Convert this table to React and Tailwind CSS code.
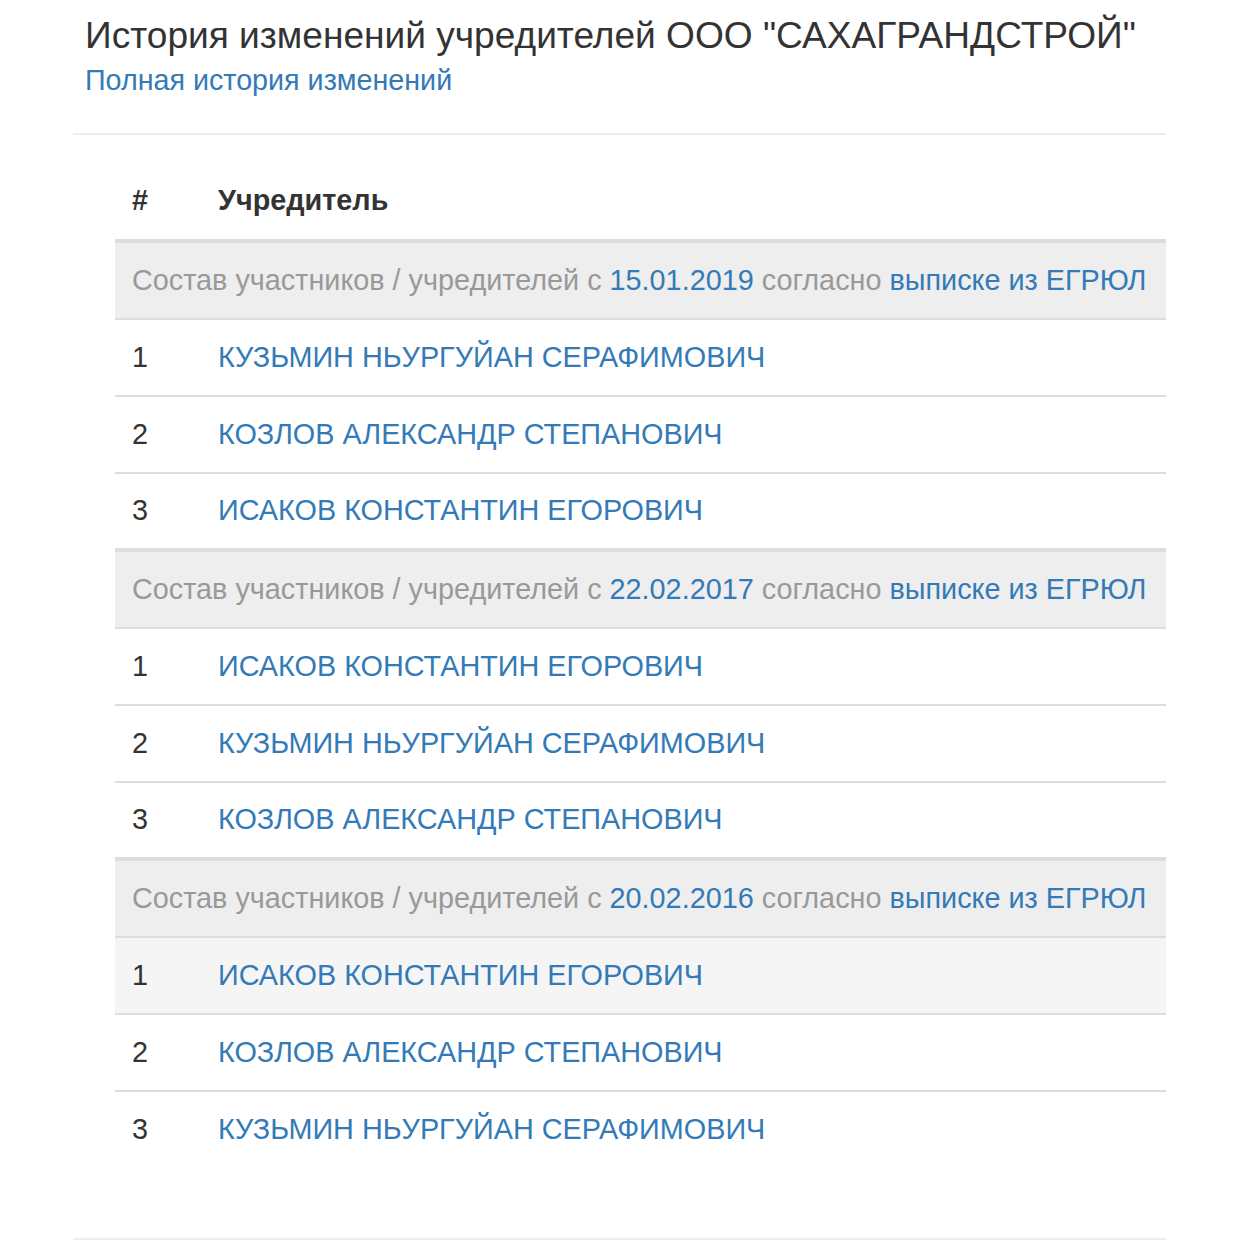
import React from "react";

const groups = [
  {
    date: "15.01.2019",
    people: [
      "КУЗЬМИН НЬУРГУЙАН СЕРАФИМОВИЧ",
      "КОЗЛОВ АЛЕКСАНДР СТЕПАНОВИЧ",
      "ИСАКОВ КОНСТАНТИН ЕГОРОВИЧ",
    ],
  },
  {
    date: "22.02.2017",
    people: [
      "ИСАКОВ КОНСТАНТИН ЕГОРОВИЧ",
      "КУЗЬМИН НЬУРГУЙАН СЕРАФИМОВИЧ",
      "КОЗЛОВ АЛЕКСАНДР СТЕПАНОВИЧ",
    ],
  },
  {
    date: "20.02.2016",
    people: [
      "ИСАКОВ КОНСТАНТИН ЕГОРОВИЧ",
      "КОЗЛОВ АЛЕКСАНДР СТЕПАНОВИЧ",
      "КУЗЬМИН НЬУРГУЙАН СЕРАФИМОВИЧ",
    ],
  },
];

const App = () => {
  return (
    <div className="min-h-[1240px] bg-white font-['Liberation_Sans',Arial,sans-serif] text-[#333]">
      <div className="pl-[73px] pr-[74px] pt-[13px]">
        <div className="pl-[12px]">
          <h1 className="text-[37.1px] leading-[44px]">
            История изменений учредителей ООО "САХАГРАНДСТРОЙ"
          </h1>
          <a href="#" className="block text-[28.7px] leading-[40px] text-[#337ab7] mt-[3px]">
            Полная история изменений
          </a>
        </div>
        <div className="mt-[33px] h-[2px] bg-[#eee]" />

        <div className="pl-[42px] pt-[35px]">
          <table className="w-full border-collapse text-[28.8px]">
            <thead>
              <tr className="border-b-[4px] border-[#ddd]">
                <th className="w-[103px] pl-[17px] h-[71px] pb-[8px] text-left font-bold align-middle">#</th>
                <th className="text-left font-bold align-middle pb-[8px]">Учредитель</th>
              </tr>
            </thead>
            <tbody>
              {groups.map((g, gi) => (
                <React.Fragment key={g.date}>
                  <tr className={`bg-[#eee] ${gi > 0 ? "border-t-[4px] border-[#ddd]" : ""}`}>
                    <td colSpan={2} className="pl-[17px] h-[78px] text-[#999] whitespace-nowrap">
                      Состав участников / учредителей с{" "}
                      <a href="#" className="text-[#337ab7]">{g.date}</a> согласно{" "}
                      <a href="#" className="text-[#337ab7]">выписке из ЕГРЮЛ</a>
                    </td>
                  </tr>
                  {g.people.map((p, i) => (
                    <tr
                      key={p + i}
                      className={`border-t-[2px] border-[#ddd] ${gi === 2 && i === 0 ? "bg-[#f5f5f5]" : ""}`}
                    >
                      <td className="pl-[17px] h-[77px]">{i + 1}</td>
                      <td>
                        <a href="#" className="text-[#337ab7]">{p}</a>
                      </td>
                    </tr>
                  ))}
                </React.Fragment>
              ))}
            </tbody>
          </table>
        </div>
        <div className="mt-[70px] h-[2px] bg-[#eee]" />
      </div>
    </div>
  );
};

export default App;
